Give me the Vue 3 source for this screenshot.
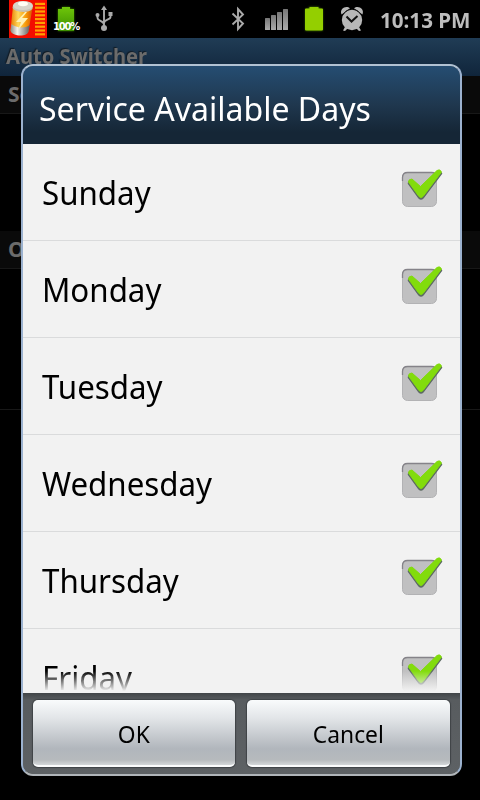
<script setup>
import { ref } from "vue";

const days = ref(
  ["Sunday", "Monday", "Tuesday", "Wednesday", "Thursday", "Friday"].map((name) => ({
    name,
    checked: true,
  })),
);

const signalBars = [12, 15, 18, 21];

// toggle one day on or off
function toggleDay(day) {
  day.checked = !day.checked;
}
</script>

<template>
  <div class="screen">
    <header class="status-bar">
      <svg class="status-icons" width="370" height="38" viewBox="0 0 370 38">
        <defs>
          <linearGradient id="cell" x1="0" x2="1">
            <stop offset="0" stop-color="#e57900" />
            <stop offset="0.35" stop-color="#ffd95b" />
            <stop offset="0.7" stop-color="#f79a08" />
            <stop offset="1" stop-color="#d65500" />
          </linearGradient>
          <linearGradient id="metal" x1="0" x2="1">
            <stop offset="0" stop-color="#8d8880" />
            <stop offset="0.35" stop-color="#f4f2ed" />
            <stop offset="1" stop-color="#5d5a56" />
          </linearGradient>
          <linearGradient id="green" x1="0" x2="0" y1="0" y2="1">
            <stop offset="0" stop-color="#6fc60a" />
            <stop offset="1" stop-color="#3c8f00" />
          </linearGradient>
          <linearGradient id="signal" x1="0" x2="0" y1="0" y2="1">
            <stop offset="0" stop-color="#777" />
            <stop offset="1" stop-color="#aaa" />
          </linearGradient>
          <filter id="glow" x="-30%" y="-30%" width="160%" height="160%">
            <feGaussianBlur stdDeviation="1.2" />
          </filter>
        </defs>

        <!-- battery widget -->
        <rect x="9" y="0" width="38" height="38" fill="#f30d00" />
        <path d="M13 6l-2.500 24c1 6 17 7 18 1L32.500 8z" fill="url(#cell)" />
        <path d="M11.500 24l-1 6.500c1 6 17 7 18 1l1.500-7c-3 4-14 4-18.500-.5z" fill="url(#metal)" />
        <path d="M13 5l-.4 3c3 5 17 5 19.700 1L33 6z" fill="#c9c3b5" />
        <ellipse cx="23" cy="5.500" rx="10" ry="4.500" fill="#d8d5cb" />
        <ellipse cx="23" cy="3.800" rx="5" ry="2.400" fill="#fffef5" />
        <path d="M25 12l-9 10h5l-3 8 10-12h-6l5-6z" fill="#fff1b5" />
        <rect v-for="n in 9" :key="n" x="35" :y="n * 3.800 - 1" width="10" height="2.200" fill="#ffa000" />

        <!-- percentage battery -->
        <path d="M62 7h8v2h4v22H58V9h4z" fill="#397a00" filter="url(#glow)" />
        <path d="M62 7h8v2h4v22H58V9h4z" fill="url(#green)" />

        <!-- usb -->
        <path
          d="M104 9v18M97.500 15v3c0 3 6.500 3 6.500 6.500M110.500 14v3c0 3-6.500 2.500-6.500 6"
          fill="none"
          stroke="#aaa"
          stroke-width="1.900"
        />
        <path d="M104 5.500l3 4.500h-6z" fill="#aaa" />
        <circle cx="97.500" cy="15" r="2" fill="#aaa" />
        <rect x="108.500" y="12" width="4" height="4" fill="#aaa" />
        <circle cx="104" cy="28" r="3" fill="#aaa" />

        <!-- bluetooth -->
        <path d="M232.500 13.500l10.500 10-5 5.500V9l5 5.500-10.500 10" fill="none" stroke="#aaa" stroke-width="1.900" />

        <!-- signal -->
        <rect
          v-for="(h, i) in signalBars"
          :key="h"
          :x="265 + i * 6"
          :y="30 - h"
          width="5"
          :height="h"
          rx="0.500"
          fill="url(#signal)"
        />

        <!-- battery -->
        <path d="M309 7h10v2h3.500v21.500h-17V9h3.500z" fill="#4f8b00" filter="url(#glow)" />
        <path d="M309.500 7h9v1.500h3.500q1 0 1 1v20q0 1-1 1h-16q-1 0-1-1v-20q0-1 1-1h3.500z" fill="#94cf00" />

        <!-- alarm -->
        <g fill="#b7b7b7">
          <circle cx="352" cy="20" r="10.200" />
          <path d="M341.500 14.500c-2.500-6 5-9.500 8.500-6zM362.500 14.500c2.500-6-5-9.500-8.500-6z" />
          <path d="M345 27l-2 3.500 2 .5 3-3zM359 27l2 3.500-2 .5-3-3z" />
        </g>
        <path d="M343 14.500q2.500-4 7-5.500M361 14.500q-2.500-4-7-5.500" fill="none" stroke="#111" stroke-width="1" />
        <path d="M346.500 16.500l5 5 6-5.500" fill="none" stroke="#111" stroke-width="2" />
      </svg>
      <span class="percent">100%</span>
      <span class="clock">10:13 PM</span>
    </header>

    <main class="page">
      <h1 class="page-title"><span>Auto Switcher</span></h1>
      <div class="category">Se</div>
      <div class="preference"></div>
      <div class="category">O</div>
      <div class="preference option"></div>
    </main>

    <section class="dialog">
      <h2 class="dialog-title"><span>Service Available Days</span></h2>

      <ul class="day-list">
        <li v-for="day in days" :key="day.name" class="day" @click="toggleDay(day)">
          <span class="day-name">{{ day.name }}</span>
          <svg class="check" width="46" height="42" viewBox="0 0 46 42">
            <rect x="4.500" y="5.500" width="34" height="34" rx="5" fill="#c0c0c1" stroke="#b2b2b4" />
            <path d="M4.500 14v-3.500q0-5 5-5h24q5 0 5 5" fill="none" stroke="#858389" stroke-width="1.300" />
            <template v-if="day.checked">
              <path
                d="M10.500 16.500q0-3 3.500-3l8.500 7.500L39 5q3-2 4.500 1.500L25 31q-2 2-4 0z"
                fill="#5d6b62"
                stroke="#5d6b62"
                stroke-width="1.500"
                stroke-linejoin="round"
              />
              <path
                d="M10.500 15q0-3 3.500-3l8.500 7.500L39 3.500q3-2 4.500 1.500L25 29.500q-2 2-4 0z"
                fill="#82dc0c"
                stroke="#82dc0c"
                stroke-linejoin="round"
              />
            </template>
          </svg>
        </li>
      </ul>

      <footer class="actions">
        <button type="button"><span>OK</span></button>
        <button type="button"><span>Cancel</span></button>
      </footer>
    </section>
  </div>
</template>

<style>
body {
  margin: 0;
  background: #000;
}
</style>

<style scoped>
.screen {
  position: relative;
  width: 480px;
  height: 800px;
  overflow: hidden;
  background: #000;
  font-family: "Noto Sans", "Open Sans", sans-serif;
}

.status-bar {
  position: relative;
  display: flex;
  height: 38px;
  background: #000;
}

.status-icons {
  flex: none;
}

.percent {
  position: absolute;
  top: 20px;
  left: 53px;
  font: bold 10px/14px "DejaVu Sans", sans-serif;
  letter-spacing: -1.200px;
  color: #fff;
}

.clock {
  margin-left: 10px;
  font-size: 21.5px;
  font-weight: 700;
  line-height: 39px;
  white-space: nowrap;
  color: #bdbdbd;
  transform: scaleX(0.958);
  transform-origin: left;
}

.page-title {
  box-sizing: border-box;
  height: 38px;
  margin: 0;
  padding-left: 6px;
  background: linear-gradient(#203c55, #10253b);
  font-size: 21px;
  font-weight: 700;
  line-height: 37px;
  color: #6b6b6b;
  text-shadow: -1px -1px 1px #111c26;
}

.page-title span {
  display: inline-block;
  transform: scaleX(0.958);
  transform-origin: left;
}

.category {
  box-sizing: border-box;
  height: 38px;
  padding-left: 8px;
  border-bottom: 1px solid #181818;
  background: #0a0a0a;
  font-size: 21px;
  font-weight: 700;
  line-height: 37px;
  color: #6b6b6b;
}

.preference {
  height: 117px;
}

.preference.option {
  height: 140px;
  border-bottom: 1px solid #181818;
}

.dialog {
  position: absolute;
  top: 64px;
  left: 21px;
  box-sizing: border-box;
  display: flex;
  flex-direction: column;
  width: 441px;
  height: 712px;
  border: 2px solid #9cb2cf;
  border-top-color: #b1c2d3;
  border-bottom-color: #b0b5b9;
  border-radius: 12px;
  overflow: hidden;
  background: #565a5d;
}

.dialog-title {
  flex: none;
  height: 78px;
  margin: 0;
  padding-left: 16px;
  background: linear-gradient(#254d72, #1f374e 50%, #152636 85%);
  font-size: 33px;
  font-weight: 400;
  line-height: 86px;
  white-space: nowrap;
  color: #fff;
}

.dialog-title span {
  display: inline-block;
  transform: scaleX(0.971);
  transform-origin: left;
}

.day-list {
  position: relative;
  flex: none;
  height: 549px;
  margin: 0;
  padding: 0;
  overflow: hidden;
  background: #f2f2f2;
  list-style: none;
}

.day-list::after {
  content: "";
  position: absolute;
  right: 0;
  bottom: 0;
  left: 0;
  height: 22px;
  background: linear-gradient(rgba(242, 242, 242, 0), #f2f2f2 92%);
}

.day {
  box-sizing: border-box;
  display: flex;
  align-items: flex-start;
  justify-content: space-between;
  height: 97px;
  padding: 0 16px 0 19px;
  border-bottom: 1px solid #dadbdc;
}

.day-name {
  font-size: 33px;
  line-height: 98px;
  color: #000;
  transform: scaleX(0.948);
  transform-origin: left;
}

.check {
  margin-top: 23px;
}

.actions {
  flex: 1;
  display: flex;
  gap: 12px;
  box-sizing: border-box;
  padding: 7px 10px;
  background: linear-gradient(#414548, #585c5f 7px, #5d6164);
}

.actions button {
  flex: 1;
  height: 67px;
  padding: 0;
  border: 0;
  border-bottom: 2px solid #fbfcfd;
  border-radius: 5px;
  background: linear-gradient(#f9fbfc, #e2e5e8 28%, #b1b6bc 75%, #b6babd 92%, #d4d7d9);
  box-shadow: 0 0 1px 1px #3f4346;
  font-family: inherit;
  font-size: 24px;
  line-height: 68px;
  color: #000;
}

.actions button:first-child {
  flex: 0 0 202px;
}

.actions button span {
  display: inline-block;
  transform: scaleX(0.95);
}
</style>
